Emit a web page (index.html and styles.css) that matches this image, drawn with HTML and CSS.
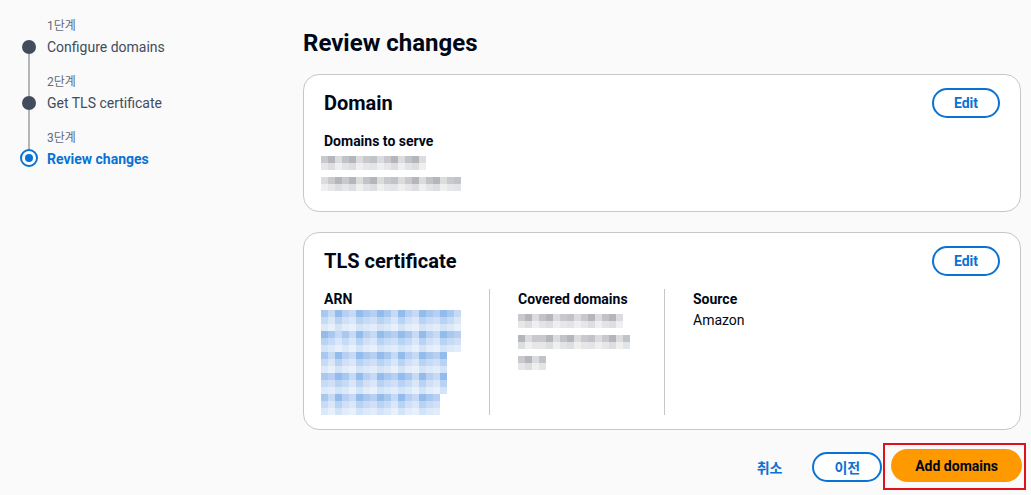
FILE: index.html
```html
<!DOCTYPE html>
<html lang="ko">

<head>
    <meta charset="UTF-8">
    <meta name="viewport" content="width=device-width, initial-scale=1.0">
    <title>Review changes</title>
    <link rel="stylesheet" href="styles.css">
</head>

<body>
    <div class="page">
        <nav class="steps">
            <div class="step first">
                <div class="rail"><span class="seg seg-top"></span><span class="dot"></span><span class="seg seg-bottom"></span></div>
                <div class="step-text">
                    <div class="step-num">1단계</div>
                    <div class="step-title">Configure domains</div>
                </div>
            </div>
            <div class="step">
                <div class="rail"><span class="seg seg-top"></span><span class="dot"></span><span class="seg seg-bottom"></span></div>
                <div class="step-text">
                    <div class="step-num">2단계</div>
                    <div class="step-title">Get TLS certificate</div>
                </div>
            </div>
            <div class="step last active">
                <div class="rail"><span class="seg seg-top"></span><span class="dot"></span><span class="seg seg-bottom"></span></div>
                <div class="step-text">
                    <div class="step-num">3단계</div>
                    <div class="step-title">Review changes</div>
                </div>
            </div>
        </nav>

        <main class="content">
            <h1>Review changes</h1>

            <section class="card">
                <div class="card-head">
                    <h2>Domain</h2>
                    <button class="btn btn-normal">Edit</button>
                </div>
                <div class="field-label">Domains to serve</div>
                <div class="pix gray w105 first-row shift"></div>
                <div class="pix gray alt w140 next-row shift"></div>
            </section>

            <section class="card">
                <div class="card-head">
                    <h2>TLS certificate</h2>
                    <button class="btn btn-normal">Edit</button>
                </div>
                <div class="columns">
                    <div class="col">
                        <div class="field-label">ARN</div>
                        <div class="arn shift">
                            <div class="pix blue w140 tall"></div>
                            <div class="pix blue alt w140 tall"></div>
                            <div class="pix blue w126 tall"></div>
                            <div class="pix blue alt w126 tall"></div>
                            <div class="pix blue w119 tall"></div>
                        </div>
                    </div>
                    <div class="col">
                        <div class="field-label">Covered domains</div>
                        <div class="pix gray w105 first-row"></div>
                        <div class="pix gray alt w112 next-row"></div>
                        <div class="pix gray w28 next-row"></div>
                    </div>
                    <div class="col">
                        <div class="field-label">Source</div>
                        <div class="field-value">Amazon</div>
                    </div>
                </div>
            </section>

            <div class="actions">
                <button class="btn btn-link">취소</button>
                <button class="btn btn-normal">이전</button>
                <div class="highlight">
                    <button class="btn btn-primary">Add domains</button>
                </div>
            </div>
        </main>
    </div>
</body>

</html>
```

FILE: styles.css
```css
* {
    padding: 0;
    margin: 0;
    box-sizing: border-box;
}

body {
    background-color: #fafafa;
    color: #000716;
    font-family: Roboto, "Noto Sans CJK KR", sans-serif;
    font-size: 14px;
}

.page {
    display: flex;
}

/* wizard steps */
.steps {
    width: 303px;
    padding: 17px 0 0 20px;
}

.step {
    display: flex;
    gap: 9px;
}

.rail {
    width: 18px;
    display: flex;
    flex-direction: column;
    align-items: center;
}

.seg {
    width: 2px;
    background-color: #b4b4bb;
}

.seg-top {
    height: 23px;
}

.seg-bottom {
    flex: 1;
}

.first .seg-top,
.last .seg-bottom {
    visibility: hidden;
}

.dot {
    width: 14px;
    height: 14px;
    border-radius: 50%;
    background-color: #414d5c;
}

.active .seg-top {
    height: 22px;
}

.active .dot {
    width: 18px;
    height: 18px;
    margin-top: -2px;
    background-color: #fff;
    border: 2px solid #0972d3;
    display: flex;
    align-items: center;
    justify-content: center;
}

.active .dot::after {
    content: "";
    width: 8px;
    height: 8px;
    border-radius: 50%;
    background-color: #0972d3;
}

.step-text {
    padding-bottom: 15px;
}

.step-num {
    font-size: 12px;
    line-height: 19px;
    color: #5f6b7a;
}

.step-title {
    line-height: 22px;
    color: #414d5c;
}

.active .step-title {
    color: #0972d3;
    font-weight: 700;
}

/* main column */
.content {
    flex: 1;
    padding: 28px 10px 0 0;
}

h1 {
    font-size: 24px;
    line-height: 30px;
    font-weight: 700;
    margin-bottom: 16px;
}

.card {
    background-color: #fff;
    border: 1px solid #c6c6cd;
    border-radius: 16px;
    padding: 12px 20px 20px;
    margin-bottom: 20px;
}

.card:last-of-type {
    padding-bottom: 14px;
    margin-bottom: 13px;
}

.card-head {
    display: flex;
    justify-content: space-between;
    align-items: center;
    height: 32px;
}

h2 {
    font-size: 20px;
    line-height: 32px;
    font-weight: 700;
}

.field-label {
    font-weight: 700;
    line-height: 20px;
}

.card > .field-label {
    margin-top: 12px;
}

.field-value {
    line-height: 22px;
}

.columns {
    display: grid;
    grid-template-columns: 165px 175px 1fr;
    margin-top: 12px;
}

.col + .col {
    border-left: 1px solid #c6c6cd;
    padding-left: 28px;
}

/* blurred values */
.pix {
    height: 14px;
    background-image:
        linear-gradient(to bottom, transparent 0 7px, rgba(255, 255, 255, .55) 7px 14px),
        repeating-linear-gradient(90deg, var(--c1) 0 7px, var(--c2) 7px 14px, var(--c3) 14px 21px, var(--c4) 21px 28px, var(--c2) 28px 35px, var(--c3) 35px 42px, var(--c1) 42px 49px, var(--c4) 49px 56px, var(--c3) 56px 63px);
}

.alt {
    background-position: 0 0, 21px 0;
}

.shift {
    margin-left: -3px;
}

.gray {
    --c1: #c9c9cd;
    --c2: #b4b6bc;
    --c3: #dcdcdf;
    --c4: #c0c3c8;
}

.blue {
    --c1: #a8c8f0;
    --c2: #c6daf5;
    --c3: #93bbec;
    --c4: #b7cff2;
}

.first-row {
    margin-top: 5px;
}

.next-row {
    margin-top: 7px;
}

.arn {
    margin-top: 1px;
}

.tall {
    height: 21px;
    background-image:
        linear-gradient(to bottom, transparent 0 7px, rgba(255, 255, 255, .35) 7px 14px, rgba(255, 255, 255, .6) 14px 21px),
        repeating-linear-gradient(90deg, var(--c1) 0 7px, var(--c2) 7px 14px, var(--c3) 14px 21px, var(--c4) 21px 28px, var(--c2) 28px 35px, var(--c3) 35px 42px, var(--c1) 42px 49px, var(--c4) 49px 56px, var(--c3) 56px 63px);
}

.w28 { width: 28px; }
.w105 { width: 105px; }
.w112 { width: 112px; }
.w119 { width: 119px; }
.w126 { width: 126px; }
.w140 { width: 140px; }

/* buttons */
.btn {
    font-family: inherit;
    font-size: 14px;
    font-weight: 700;
    border-radius: 20px;
    cursor: pointer;
    white-space: nowrap;
}

.btn-normal {
    height: 30px;
    padding: 0 20px;
    background-color: #fff;
    color: #0972d3;
    border: 2px solid #0972d3;
}

.btn-link {
    height: 30px;
    padding: 0 20px;
    background: none;
    border: none;
    color: #0972d3;
}

.btn-primary {
    height: 33px;
    padding: 0 24px;
    background-color: #ff9900;
    color: #000716;
    border: none;
}

.actions {
    display: flex;
    justify-content: flex-end;
    align-items: center;
    gap: 10px;
}

.highlight {
    border: 2px solid #e0101c;
    padding: 4px 2px 6px 6px;
    margin: 0 -5px 0 -9px;
}

.highlight .btn {
    display: block;
}
```
